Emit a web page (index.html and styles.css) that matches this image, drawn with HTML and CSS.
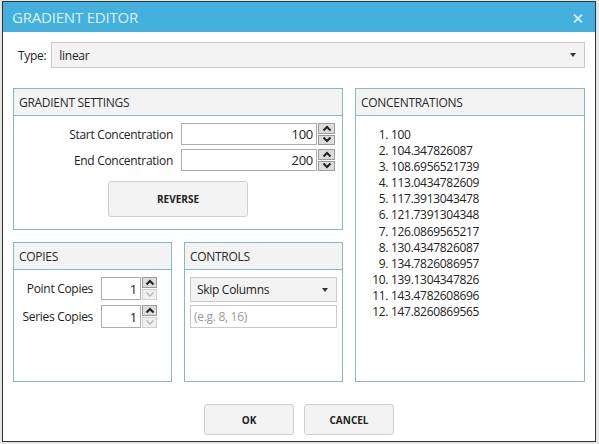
FILE: index.html
```html
<!DOCTYPE html>
<html>

<head>
    <title>Gradient Editor</title>
    <meta charset="UTF-8">
    <link rel="stylesheet" href="styles.css">
</head>

<body>
    <div class="dialog">
        <div class="title-bar">
            <span class="title">GRADIENT EDITOR</span>
            <svg class="close" width="10" height="9" viewBox="0 0 10 9">
                <path d="M1 0.5 L9 8.5 M9 0.5 L1 8.5" stroke="#c9ecf8" stroke-width="2" fill="none" />
            </svg>
        </div>

        <div class="dialog-body">
            <div class="type-row">
                <label class="type-label">Type:</label>
                <div class="select type-select">
                    <span>linear</span>
                    <span class="caret"></span>
                </div>
            </div>

            <div class="panels">
                <div class="panel gradient-panel">
                    <div class="panel-header">GRADIENT SETTINGS</div>
                    <div class="panel-body">
                        <div class="field-grid wide">
                            <label>Start Concentration</label>
                            <div class="num-field">
                                <div class="num-box">100</div>
                                <div class="spin">
                                    <div class="spin-btn"><svg width="10" height="7" viewBox="0 0 10 7"><path d="M1.5 5.5 L5 2 L8.5 5.5" stroke="#222" stroke-width="2" fill="none" /></svg></div>
                                    <div class="spin-btn"><svg width="10" height="7" viewBox="0 0 10 7"><path d="M1.5 1.5 L5 5 L8.5 1.5" stroke="#222" stroke-width="2" fill="none" /></svg></div>
                                </div>
                            </div>
                            <label>End Concentration</label>
                            <div class="num-field">
                                <div class="num-box">200</div>
                                <div class="spin">
                                    <div class="spin-btn"><svg width="10" height="7" viewBox="0 0 10 7"><path d="M1.5 5.5 L5 2 L8.5 5.5" stroke="#222" stroke-width="2" fill="none" /></svg></div>
                                    <div class="spin-btn"><svg width="10" height="7" viewBox="0 0 10 7"><path d="M1.5 1.5 L5 5 L8.5 1.5" stroke="#222" stroke-width="2" fill="none" /></svg></div>
                                </div>
                            </div>
                        </div>
                        <div class="reverse-row">
                            <button class="button reverse">REVERSE</button>
                        </div>
                    </div>
                </div>

                <div class="panel conc-panel">
                    <div class="panel-header">CONCENTRATIONS</div>
                    <ol class="conc-list">
                        <li>100</li>
                        <li>104.347826087</li>
                        <li>108.6956521739</li>
                        <li>113.0434782609</li>
                        <li>117.3913043478</li>
                        <li>121.7391304348</li>
                        <li>126.0869565217</li>
                        <li>130.4347826087</li>
                        <li>134.7826086957</li>
                        <li>139.1304347826</li>
                        <li>143.4782608696</li>
                        <li>147.8260869565</li>
                    </ol>
                </div>

                <div class="lower-row">
                    <div class="panel">
                        <div class="panel-header">COPIES</div>
                        <div class="panel-body">
                            <div class="field-grid narrow">
                                <label>Point Copies</label>
                                <div class="num-field small">
                                    <div class="num-box">1</div>
                                    <div class="spin">
                                        <div class="spin-btn"><svg width="10" height="7" viewBox="0 0 10 7"><path d="M1.5 5.5 L5 2 L8.5 5.5" stroke="#222" stroke-width="2" fill="none" /></svg></div>
                                        <div class="spin-btn off"><svg width="10" height="7" viewBox="0 0 10 7"><path d="M1.5 1.5 L5 5 L8.5 1.5" stroke="#b8b8b8" stroke-width="1.5" fill="none" /></svg></div>
                                    </div>
                                </div>
                                <label>Series Copies</label>
                                <div class="num-field small">
                                    <div class="num-box">1</div>
                                    <div class="spin">
                                        <div class="spin-btn"><svg width="10" height="7" viewBox="0 0 10 7"><path d="M1.5 5.5 L5 2 L8.5 5.5" stroke="#222" stroke-width="2" fill="none" /></svg></div>
                                        <div class="spin-btn off"><svg width="10" height="7" viewBox="0 0 10 7"><path d="M1.5 1.5 L5 5 L8.5 1.5" stroke="#b8b8b8" stroke-width="1.5" fill="none" /></svg></div>
                                    </div>
                                </div>
                            </div>
                        </div>
                    </div>

                    <div class="panel">
                        <div class="panel-header">CONTROLS</div>
                        <div class="panel-body controls">
                            <div class="select">
                                <span>Skip Columns</span>
                                <span class="caret"></span>
                            </div>
                            <div class="text-field">(e.g. 8, 16)</div>
                        </div>
                    </div>
                </div>
            </div>

            <div class="footer">
                <button class="button">OK</button>
                <button class="button">CANCEL</button>
            </div>
        </div>
    </div>
</body>

</html>
```

FILE: styles.css
```css
body {
    margin: 0;
    padding: 0;
    background-color: #e6e6e6;
    font-family: "Open Sans", "Noto Sans", sans-serif;
    font-size: 12px;
    letter-spacing: -0.3px;
    color: #222;
}

.dialog {
    margin: 1px 0 0 2px;
    width: 592px;
    height: 439px;
    border: 1px solid #333;
    background-color: #fff;
    display: flex;
    flex-direction: column;
}

.title-bar {
    height: 30px;
    background-color: #43b0de;
    display: flex;
    align-items: center;
    justify-content: space-between;
    padding: 0 12px 0 9px;
}

.title {
    color: #dcf3fb;
    font-size: 15px;
    letter-spacing: -0.2px;
}

.close {
    margin-top: 2px;
}

.dialog-body {
    padding: 10px 10px 0 10px;
}

.type-row {
    display: flex;
    align-items: center;
    gap: 5px;
    padding-left: 5px;
}

.select {
    height: 23px;
    border: 1px solid #cacaca;
    background-color: #f3f3f3;
    display: flex;
    align-items: center;
    justify-content: space-between;
    padding: 0 8px 0 6px;
}

.type-select {
    flex: 1;
    height: 24px;
    padding-left: 7px;
}

.caret {
    width: 0;
    height: 0;
    border-left: 3px solid transparent;
    border-right: 3px solid transparent;
    border-top: 4px solid #333;
}

.panels {
    margin-top: 20px;
    display: grid;
    grid-template-columns: 330px 230px;
    grid-template-rows: 142px 140px;
    column-gap: 12px;
    row-gap: 12px;
}

.panel {
    border: 1px solid #8ab6c5;
    box-sizing: border-box;
    display: flex;
    flex-direction: column;
}

.conc-panel {
    grid-column: 2;
    grid-row: 1 / span 2;
}

.panel-header {
    height: 26px;
    flex-shrink: 0;
    background-color: #f3f3f3;
    border-bottom: 1px solid #8ab6c5;
    display: flex;
    align-items: center;
    padding-left: 5px;
    color: #2a2a2a;
}

.panel-body {
    padding-top: 7px;
}

.field-grid {
    display: grid;
    column-gap: 8px;
    row-gap: 4px;
    align-items: center;
}

.field-grid label {
    text-align: right;
}

.field-grid.wide {
    grid-template-columns: 159px 154px;
    grid-auto-rows: 22px;
}

.field-grid.narrow {
    grid-template-columns: 79px 56px;
    grid-auto-rows: 23px;
    row-gap: 5px;
}

.num-field {
    display: flex;
    height: 100%;
}

.num-box {
    flex: 1;
    border: 1px solid #adadad;
    display: flex;
    align-items: center;
    justify-content: flex-end;
    padding-right: 3px;
    font-size: 13px;
}

.spin {
    display: flex;
    flex-direction: column;
    justify-content: center;
    gap: 1px;
    margin-left: 1px;
}

.spin-btn {
    width: 15px;
    height: 10px;
    background-color: #dcdcdc;
    border: 1px solid #9a9a9a;
    display: flex;
    align-items: center;
    justify-content: center;
}

.spin-btn.off {
    background-color: #f0f0f0;
    border-color: #cfcfcf;
}

.num-field.small .spin-btn {
    width: 13px;
}

.reverse-row {
    margin-top: 10px;
    display: flex;
    justify-content: center;
}

.button {
    background-color: #f3f3f3;
    border: 1px solid #cfcfcf;
    border-radius: 3px;
    font-family: "Open Sans", "Noto Sans", sans-serif;
    font-size: 10px;
    font-weight: bold;
    color: #222;
    width: 90px;
    height: 31px;
    padding: 0;
}

.reverse {
    width: 140px;
    height: 36px;
}

.lower-row {
    grid-column: 1;
    grid-row: 2;
    display: flex;
    gap: 12px;
}

.lower-row .panel {
    flex: 1;
}

.controls {
    padding: 7px 5px 0 5px;
    display: flex;
    flex-direction: column;
    gap: 3px;
}

.text-field {
    height: 21px;
    border: 1px solid #cacaca;
    display: flex;
    align-items: center;
    padding-left: 3px;
    color: #999;
}

.conc-list {
    margin: 0;
    padding: 11px 0 0 35px;
    line-height: 16.1px;
}

.footer {
    margin-top: 22px;
    display: flex;
    justify-content: center;
    gap: 10px;
}
```
